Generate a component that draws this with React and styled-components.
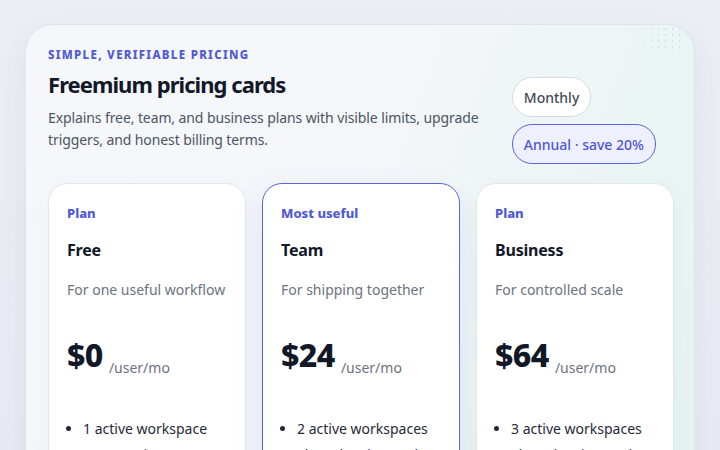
import React from 'react';
import styled, { createGlobalStyle } from 'styled-components';

const plans = [
  {
    label: 'Plan',
    name: 'Free',
    tagline: 'For one useful workflow',
    price: '$0',
    features: ['1 active workspace', 'Community support'],
  },
  {
    label: 'Most useful',
    name: 'Team',
    tagline: 'For shipping together',
    price: '$24',
    features: ['2 active workspaces', 'Shared review and'],
    featured: true,
  },
  {
    label: 'Plan',
    name: 'Business',
    tagline: 'For controlled scale',
    price: '$64',
    features: ['3 active workspaces', 'Shared review and'],
  },
];

const GlobalStyle = createGlobalStyle`
  html, body {
    margin: 0;
    padding: 0;
    background: #e9ecf3;
    font-family: "Noto Sans", "Open Sans", sans-serif;
    overflow: hidden;
  }
`;

const Page = styled.div`
  width: 720px;
  height: 450px;
  padding: 24px 25px 0;
  box-sizing: border-box;
  overflow: hidden;
  background: linear-gradient(180deg, #eceef4 0%, #e8ebf2 100%);
`;

const Panel = styled.section`
  position: relative;
  height: 460px;
  box-sizing: border-box;
  padding: 22px 22px 0;
  border: 1px solid #dfe3eb;
  border-radius: 28px;
  background: linear-gradient(110deg, #f6f7fb 0%, #f5f6fa 45%, #e4f4f0 100%);
  box-shadow: 0 10px 30px rgba(80, 90, 130, 0.08);
  overflow: hidden;

  &::after {
    content: '';
    position: absolute;
    top: 1px;
    right: 4px;
    width: 56px;
    height: 32px;
    background-image: radial-gradient(circle, #aac7c9 0.7px, transparent 1px);
    background-size: 7px 6px;
    -webkit-mask-image: radial-gradient(ellipse at 55% 25%, #000 20%, transparent 70%);
    mask-image: radial-gradient(ellipse at 55% 25%, #000 20%, transparent 70%);
    opacity: 0.6;
  }
`;

const Header = styled.header`
  display: flex;
  justify-content: space-between;
  align-items: flex-start;
`;

const Intro = styled.div`
  width: 470px;
`;

const Eyebrow = styled.div`
  font-size: 11.5px;
  font-weight: 800;
  letter-spacing: 1.3px;
  color: #4f5ad6;
  line-height: 16px;
`;

const Title = styled.h1`
  margin: 6px 0 0;
  font-size: 22px;
  font-weight: 700;
  line-height: 30px;
  color: #111827;
  letter-spacing: -0.95px;
`;

const Lead = styled.p`
  margin: 8px 0 0;
  font-size: 14px;
  line-height: 22px;
  color: #4b5563;
  letter-spacing: -0.1px;
`;

const Toggle = styled.div`
  display: flex;
  flex-direction: column;
  align-items: flex-start;
  gap: 7px;
  margin-top: 30px;
  margin-right: 16px;
`;

const Pill = styled.button`
  height: 40px;
  padding: 0 11px;
  border-radius: 20px;
  white-space: nowrap;
  font-family: inherit;
  font-size: 14px;
  font-weight: 500;
  border: 1px solid ${(p) => (p.active ? '#5a62e2' : '#d6dae2')};
  background: ${(p) => (p.active ? '#eef0fd' : '#ffffff')};
  color: ${(p) => (p.active ? '#4f56d8' : '#414a58')};
  cursor: pointer;
`;

const Cards = styled.div`
  display: grid;
  grid-template-columns: repeat(3, 198px);
  gap: 16px;
  margin-top: 19px;
`;

const Card = styled.article`
  height: 300px;
  box-sizing: border-box;
  padding: 20px 18px;
  border-radius: 20px;
  background: #ffffff;
  border: 1px solid ${(p) => (p.featured ? '#5b63e1' : '#e1e5ed')};
  box-shadow: ${(p) =>
    p.featured ? '0 12px 30px rgba(91, 99, 225, 0.12)' : '0 8px 22px rgba(80, 90, 130, 0.05)'};
`;

const Label = styled.div`
  font-size: 13px;
  font-weight: 800;
  line-height: 18px;
  color: #4f5ad6;
`;

const Name = styled.h2`
  margin: 17px 0 0;
  font-size: 16px;
  font-weight: 700;
  line-height: 22px;
  color: #111827;
  letter-spacing: -0.2px;
`;

const Tagline = styled.p`
  margin: 19px 0 0;
  font-size: 14px;
  line-height: 20px;
  color: #6b7280;
`;

const PriceRow = styled.div`
  display: flex;
  align-items: flex-end;
  gap: 6px;
  margin-top: 37px;
`;

const Amount = styled.span`
  font-size: 32px;
  font-weight: 800;
  line-height: 36px;
  color: #111827;
  letter-spacing: -0.5px;
`;

const Unit = styled.span`
  font-size: 14px;
  line-height: 20px;
  color: #6b7280;
  margin-bottom: -5px;
`;

const Features = styled.ul`
  margin: 43px 0 0;
  padding-left: 16px;
  font-size: 14px;
  line-height: 26px;
  color: #1f2937;
`;

export default function App() {
  return (
    <Page>
      <GlobalStyle />
      <Panel>
        <Header>
          <Intro>
            <Eyebrow>SIMPLE, VERIFIABLE PRICING</Eyebrow>
            <Title>Freemium pricing cards</Title>
            <Lead>
              Explains free, team, and business plans with visible limits, upgrade triggers, and
              honest billing terms.
            </Lead>
          </Intro>
          <Toggle>
            <Pill>Monthly</Pill>
            <Pill active>Annual · save 20%</Pill>
          </Toggle>
        </Header>
        <Cards>
          {plans.map((plan) => (
            <Card key={plan.name} featured={plan.featured}>
              <Label>{plan.label}</Label>
              <Name>{plan.name}</Name>
              <Tagline>{plan.tagline}</Tagline>
              <PriceRow>
                <Amount>{plan.price}</Amount>
                <Unit>/user/mo</Unit>
              </PriceRow>
              <Features>
                {plan.features.map((f) => (
                  <li key={f}>{f}</li>
                ))}
              </Features>
            </Card>
          ))}
        </Cards>
      </Panel>
    </Page>
  );
}
